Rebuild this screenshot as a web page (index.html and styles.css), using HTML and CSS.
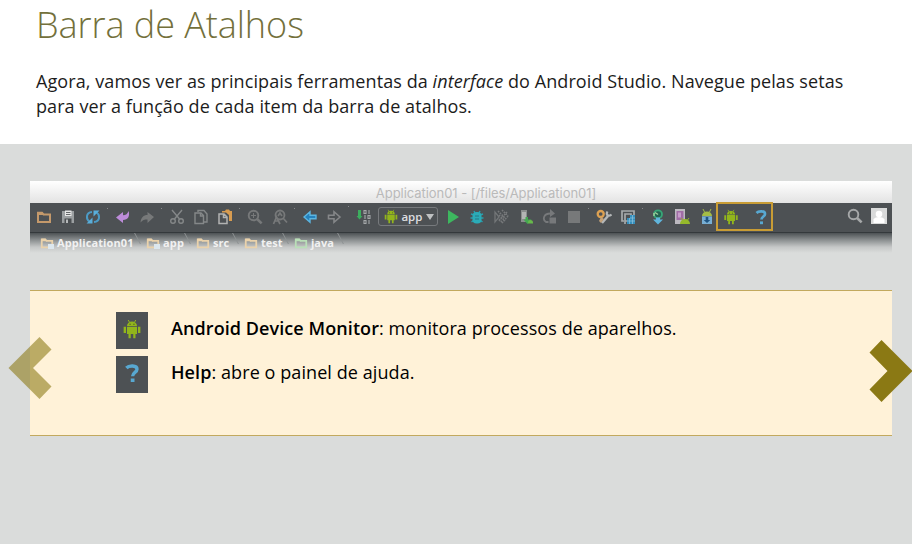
FILE: index.html
```
<!DOCTYPE html>
<html lang="pt-BR">
<head>
<meta charset="utf-8">
<title>Barra de Atalhos</title>
<link rel="stylesheet" href="styles.css">
</head>
<body>
<svg class="defs" aria-hidden="true">
  <symbol id="droid" viewBox="0 0 16 16"><path fill="#92b51c" d="M4 5.5a4 3.6 0 0 1 8 0zM4 6.1h8v5.8H4zM1.3 6.2h1.9v4.9H1.3zM12.8 6.2h1.9v4.9h-1.9zM5.2 12H7v3.3H5.2zM9 12h1.8v3.3H9z"/><path stroke="#92b51c" stroke-width=".8" d="m5 .8 1.1 2M11 .8l-1.1 2"/><path fill="#42521d" d="M6 3.7h.9v.8H6zM9.1 3.7h.9v.8h-.9z"/></symbol>
  <symbol id="help" viewBox="0 0 16 16"><path fill="none" stroke="#58a8d1" stroke-width="2.700" d="M3.500 4C5.400 1.900 12 1.500 12 4.900c0 2.700-3.500 2.500-3.500 5.700"/><path fill="#58a8d1" d="M7 12.400h3v2.800H7z"/></symbol>
  <symbol id="folder" viewBox="0 0 16 16"><path fill="none" stroke="currentColor" stroke-width="2" d="M2 13V3.800h4l1.500 1.700H14V13z"/><path fill="currentColor" d="M2 3h4.300L8 6H2z"/></symbol>
  <symbol id="lens" viewBox="0 0 16 16"><circle cx="6.500" cy="6.500" r="4.800" fill="none" stroke="currentColor" stroke-width="1.900"/><path stroke="currentColor" stroke-width="2.600" d="m9.800 9.800 4.800 4.600"/></symbol>
</svg>
<header class="intro">
  <h1>Barra de Atalhos</h1>
  <p>Agora, vamos ver as principais ferramentas da <em>interface</em> do Android Studio. Navegue pelas setas<br>para ver a função de cada item da barra de atalhos.</p>
</header>
<main class="stage">
  <section class="window">
    <div class="titlebar">Application01 - [/files/Application01]</div>
    <div class="toolbar">
      <div class="group">
        <svg class="icon orange"><use href="#folder"/></svg>
        <svg class="icon" viewBox="0 0 16 16"><path fill="#9b9fa1" d="M2 2h12v12H2z"/><path fill="#e6e7e7" d="M5 1.5h6.5V7H5z"/><path stroke="#66696b" d="M6 3.5h4.500M6 5.500h4.500"/><path fill="#4a4e51" d="M4.500 9.500h7V14h-7z"/><path fill="#b5b8b9" d="M6 10.500h2V14H6z"/></svg>
        <svg class="icon" viewBox="0 0 16 16"><path fill="none" stroke="#4c9bc5" stroke-width="2" d="M7 3C.5 3.500 1 10.500 4.500 12.500M9 13c6.500-.5 6-7.500 2.500-9.500"/><path fill="#5aaeda" d="M1.500 14.500h6v-6zM14.500 1.500h-6v6z"/></svg>
      </div>
      <div class="group">
        <svg class="icon" viewBox="0 0 16 16"><path fill="#bd8cda" d="M1 8.500 8 3v3.300c3 0 4.500-1.500 5.600-4.300 1.500 5-.5 9-5.600 9V14z"/></svg>
        <svg class="icon" viewBox="0 0 16 16"><path fill="#77797a" d="M15 8 8.500 3v3C4.500 6 2 8.500 1.500 13.500 3.500 11 5.500 10.500 8.500 10.500V14z"/></svg>
      </div>
      <div class="group">
        <svg class="icon grey" viewBox="0 0 16 16"><path d="m3 1 7.500 9M13 1 5.500 10"/><circle cx="4" cy="12" r="2.300"/><circle cx="12" cy="12" r="2.300"/></svg>
        <svg class="icon grey" viewBox="0 0 16 16"><path d="M5 3V1.500h6L14 5v8h-3M2 4h6l2.500 2.500v8H2zM7.500 4v3h3"/></svg>
        <svg class="icon" viewBox="0 0 16 16"><path fill="#d79c51" d="M5 2h3l1-1.500h3L13 2h2v10h-3V6L9 3.500H5z"/><path fill="none" stroke="#b2b3b2" stroke-width="1.500" d="M2 5h5l3 3v6.500H2zM6.500 5v3.500H10"/></svg>
      </div>
      <div class="group">
        <svg class="icon dim" viewBox="0 0 16 16"><use href="#lens"/><path stroke="currentColor" d="M4 6.500h5M6.500 4v5"/></svg>
        <svg class="icon dim" viewBox="0 0 16 16"><circle cx="8" cy="6" r="4.500" fill="none" stroke="currentColor" stroke-width="1.800"/><path fill="none" stroke="currentColor" stroke-width="1.700" d="m11 9 4 4.500M1.500 15 4.500 8 8 15M3 12h4M6 7l2-3 2 3"/></svg>
      </div>
      <div class="group">
        <svg class="icon" viewBox="0 0 16 16"><path fill="#2582bd" stroke="#5bb5e1" stroke-width="1.400" d="m2 8 6-5.300v3.600h6v3.400H8v3.600z"/></svg>
        <svg class="icon" viewBox="0 0 16 16"><path fill="none" stroke="#858789" stroke-width="1.600" d="M14 8 8 2.700v3.600H2.500v3.400H8v3.600z"/></svg>
      </div>
      <div class="group run">
        <svg class="icon" viewBox="0 0 16 16"><path fill="#3cae5e" d="M2 1h3v6h1.500l-3 3.500L.5 7H2z"/><path fill="none" stroke="#a5a8a9" stroke-width="1.100" d="M8 1.500h2v3H8zM13 1v4M9 6v4M12 6.500h2v3h-2zM8 11.500h2v3H8zM13 11v4"/></svg>
        <div class="select"><svg class="droid"><use href="#droid"/></svg><span>app</span><i></i></div>
        <svg class="icon" viewBox="0 0 16 16"><path fill="#3db75f" d="m3 1 11 7-11 7z"/></svg>
        <svg class="icon" viewBox="0 0 16 16"><path fill="none" stroke="#269fae" stroke-width="1.500" d="m5 2 1 2M11 2l-1 2M2 5l3 1M14 5l-3 1M1.500 9h13M2.500 13 5 11M13.500 13 11 11"/><rect x="3.500" y="3" width="9" height="11.500" rx="4" fill="#2babb7"/><path stroke="#277885" d="M6 7h4M6 10h4"/></svg>
        <svg class="icon" viewBox="0 0 16 16"><path fill="none" stroke="#737678" stroke-width="1.300" d="M2 3v10l4-5z"/><path stroke="#77797b" stroke-width="1.600" stroke-dasharray="1.600 1" d="m5 2 8 8M9 1l6 6M6 6l6 6M6 10l4 4M14 3l-8 9M15 7l-6 7"/></svg>
        <svg class="icon" viewBox="0 0 16 16"><path fill="#8b8e8e" d="M3 1h6v12H3z"/><path fill="#b3b5b4" d="M4 3h4v7H4z"/><path fill="#45a851" d="M7.500 8H10v2.500h3.500L9.500 15l-4-4.500h2z"/><path fill="#67b94b" d="M10 13.500a2.500 2.500 0 0 1 5 0v1h-5z"/></svg>
        <svg class="icon" viewBox="0 0 16 16"><path fill="none" stroke="#77797b" stroke-width="1.800" d="M6.500 13H4C.5 11 1 4.500 8.500 4.500"/><path fill="#77797b" d="m8 0 5 4.500L8 8zM7.500 8.500H14v6H7.500z"/></svg>
        <svg class="icon" viewBox="0 0 16 16"><path fill="#77797a" d="M2 2h12v12H2z"/></svg>
      </div>
      <div class="group">
        <svg class="icon" viewBox="0 0 16 16"><path stroke="#b4b7b8" stroke-width="2.500" d="m6 14 6-7"/><path fill="none" stroke="#b4b7b8" stroke-width="2.200" d="M11.500 2.500c-2 3.500 1 5.500 4 3"/><circle cx="4.700" cy="5" r="3" fill="none" stroke="#dda152" stroke-width="2.300"/><path fill="#c3a27a" d="m5 8 3 2-3 4-2-2z"/></svg>
        <svg class="icon" viewBox="0 0 16 16"><path fill="none" stroke="#a6aaac" stroke-width="1.700" d="M4 12H2V2h12v4M5 15V5h6v3M5 12h4"/><path fill="#358fbd" d="M7 9h3V6h5v9H7z"/><path stroke="#8fc3dc" stroke-width=".7" d="M9.500 9v6M12.500 6v9M7 12h8M10 9h5"/></svg>
      </div>
      <div class="group">
        <svg class="icon" viewBox="0 0 16 16"><circle cx="8" cy="5.300" r="4" fill="#256350" stroke="#37a777" stroke-width="1.800"/><path stroke="#9ed09c" stroke-width="1.500" d="M4 4v3M5 3.500 8 5.500"/><path fill="#60b5dc" d="M6 8.500h4v2h3L8 15.500l-5-5h3z"/></svg>
        <svg class="icon" viewBox="0 0 16 16"><path fill="#bcb9c0" d="M1 0h10v15H1z"/><path fill="#a06da6" d="M2.500 2h7v9h-7z"/><path fill="#c69dcb" d="M4 3.500h3v5H4z"/><path fill="#96b92b" d="M6 15a5 5 0 0 1 10 0z"/><path stroke="#96b92b" d="m7 9 1.500 2M15 9l-1.500 2"/></svg>
        <svg class="icon" viewBox="0 0 16 16"><path fill="#a5bd45" d="M3 7a5 4.500 0 0 1 10 0z"/><path stroke="#a5bd45" d="m4 0 1.500 3M12 0l-1.500 3"/><path fill="#78aed3" d="M3 7.300h10V15H3z"/><path fill="#1f5583" d="M6.700 8h2.600v3h2L8 14l-3.300-3h2z"/></svg>
      </div>
      <div class="highlight"><svg class="icon"><use href="#droid"/></svg><svg class="icon"><use href="#help"/></svg></div>
      <div class="account">
        <svg class="icon search"><use href="#lens"/></svg>
        <svg class="icon" viewBox="0 0 16 16"><path fill="#d9dada" d="M0 0h16v16H0z"/><circle cx="8" cy="6" r="3.300" fill="#fff"/><path fill="#fff" d="M2.500 15V11q2-2 5.500-2t5.500 2v4z"/></svg>
      </div>
    </div>
    <div class="crumbs">
      <div class="crumb project"><svg><use href="#folder"/></svg><b></b><span>Application01</span></div>
      <div class="crumb module"><svg><use href="#folder"/></svg><b></b><span>app</span></div>
      <div class="crumb src"><svg><use href="#folder"/></svg><span>src</span></div>
      <div class="crumb test"><svg><use href="#folder"/></svg><span>test</span></div>
      <div class="crumb java"><svg><use href="#folder"/></svg><span>java</span></div>
    </div>
  </section>
  <section class="panel">
    <div class="entry"><span class="tile"><svg><use href="#droid"/></svg></span><p><strong>Android Device Monitor</strong>: monitora processos de aparelhos.</p></div>
    <div class="entry"><span class="tile"><svg><use href="#help"/></svg></span><p><strong>Help</strong>: abre o painel de ajuda.</p></div>
    <svg class="arrow prev" viewBox="0 0 44 62"><path d="M31.500 0 43.500 12.500 25 31 43.500 49.500 31.500 62 .5 31z"/></svg>
    <svg class="arrow next" viewBox="0 0 44 62"><path d="M12.500 0 .5 12.500 18.500 31 .5 49.500 12.500 62 43.500 31z"/></svg>
  </section>
</main>
</body>
</html>
```
FILE: styles.css
```
* { box-sizing: border-box; }
body { margin: 0; height: 544px; overflow: hidden; background: #dadcdb; color: #1c1c1c; font: 18px/25px "Open Sans", sans-serif; }
.defs { position: absolute; width: 0; height: 0; }
.intro { height: 144px; padding: 1px 36px 0; background: #fff; }
h1 { margin: 0; font-size: 36px; line-height: 48px; font-weight: 300; letter-spacing: -.05px; color: #73703b; }
.intro p { margin: 20px 0 0; white-space: nowrap; letter-spacing: .083px; }
.stage { padding: 37px 20px 0 30px; }
.window { width: 862px; }
.titlebar { height: 22px; padding-left: 50px; background: linear-gradient(#fff, #e3e3e3); color: #bababa; font: 13px/24px "Inter", sans-serif; letter-spacing: -.05px; text-align: center; white-space: nowrap; }
.toolbar { display: flex; align-items: center; height: 30px; padding: 0 5px 2px 6px; background: #4d5154; border-bottom: 1px solid #34393c; }
.group { position: relative; display: flex; align-items: center; gap: 8.3px; margin-right: 14px; }
.group:not(:first-child)::before { content: ""; position: absolute; left: -8px; top: -1px; width: 1px; height: 1px; background: #85888a; }
.icon { flex: none; display: block; width: 16px; height: 16px; }
.orange { color: #c4996b; }
.grey { fill: none; stroke: #858889; stroke-width: 1.4; }
.dim { color: #77797a; }
.run .select { display: flex; align-items: center; width: 60px; height: 19px; margin: 0 -2px; padding-left: 4px; border: 1px solid #777a7d; border-radius: 3px; color: #dedfe0; font: 600 11.5px/16px "Open Sans", sans-serif; }
.select .droid { flex: none; width: 16px; height: 15px; margin-right: 2px; }
.select i { margin-left: 4px; border: 4.5px solid transparent; border-top: 6px solid #bfc1c2; border-bottom: 0; }
.group:nth-child(7) { margin-right: 13.6px; }
.group:nth-child(8) { margin-right: 1px; }
.highlight { display: flex; align-items: center; gap: 14px; width: 57px; height: 29px; padding-left: 5px; border: 2px solid #c89c35; }
.account { display: flex; gap: 8px; margin-left: auto; margin-top: -2px; }
.search { color: #a6a8a9; }
.crumbs { display: flex; height: 20px; padding-left: 9px; background: linear-gradient(#4d5255, #8b8f90 35%, #c5c7c7 70%, #dadcdb); color: #f1f1f1; font: 700 11px/20px "Open Sans", sans-serif; }
.crumb { position: relative; display: flex; align-items: center; gap: 2px; white-space: nowrap; }
.crumb::after { content: ""; position: absolute; right: 7px; top: 0; height: 11px; border-right: 1px solid #8e9293; transform: skewX(28deg); }
.crumb svg { flex: none; width: 16px; height: 14px; color: #ead2ab; }
.crumb b { position: absolute; left: 9px; top: 11px; width: 6px; height: 5px; background: #dce7ee; }
.project { width: 106px; }
.project span { letter-spacing: .1px; }
.module { width: 50px; }
.module span { letter-spacing: .2px; }
.src { width: 48px; }
.test { width: 50px; }
.java { width: 55px; }
.crumb.java svg { color: #b9dfb7; }
.panel { position: relative; width: 862px; height: 146px; margin-top: 37px; padding: 21px 0 0 86px; background: #fff2d8; border: solid #c2a95e; border-width: 1px 0; color: #000; letter-spacing: .08px; }
.entry { display: flex; gap: 23px; height: 44px; white-space: nowrap; }
.entry p { margin: 4px 0 0; }
.entry strong { font-weight: 600; }
.tile { display: flex; align-items: center; justify-content: center; width: 32px; height: 37px; background: #4d5154; }
.tile svg { width: 20px; height: 20px; margin-top: -3px; }
.arrow { position: absolute; width: 44px; height: 62px; fill: #8b7914; }
.prev { left: -22px; top: 46px; opacity: .58; }
.next { left: 839px; top: 49px; }
```
